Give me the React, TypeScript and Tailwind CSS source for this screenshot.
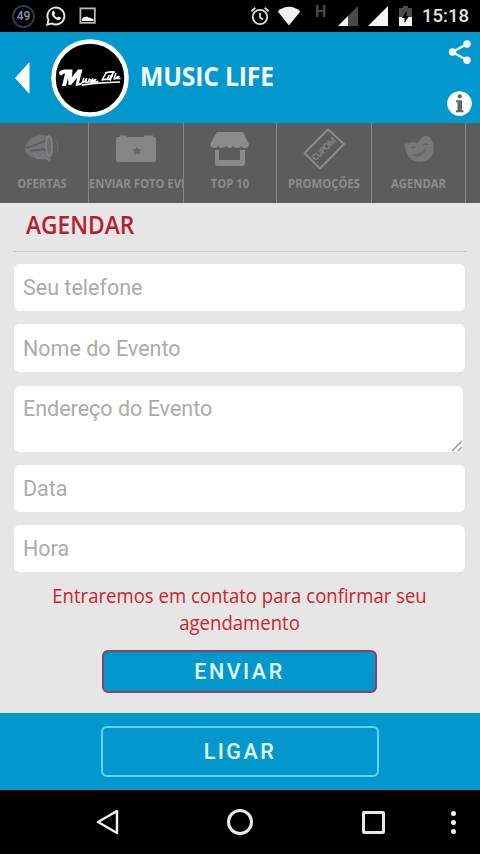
import React from 'react';

const StatusBar: React.FC = () => (
  <div className="h-8 bg-black flex items-center justify-between">
    <div className="flex items-center pl-3">
      <div className="w-[23px] h-[23px] rounded-full border-2 border-[#34344a] flex items-center justify-center text-[12px] font-medium text-[#8e94b8]">
        49
      </div>
      {/* WhatsApp */}
      <svg className="w-5 h-5 ml-[11px]" viewBox="0 0 20 20" fill="none">
        <path d="M1.3 18.7l1.2-4.6A8.5 8.5 0 1 1 5.8 17.4z" stroke="#e8e8e8" strokeWidth="1.9" />
        <path
          d="M6.7 5.2c.6-.5 1.2-.5 1.5 0l.9 1.9c.2.5-.8 1.1-.7 1.6.6 1.3 1.6 2.2 2.9 2.8.5.1 1.1-1.1 1.6-.9l1.9 1c.6.4-.1 1.9-1.1 2.3-1.6.6-4.2-.4-6-2.4-1.9-2-2.7-4.8-1-6.3z"
          fill="#e8e8e8"
        />
      </svg>
      {/* Picture */}
      <svg className="w-[18px] h-[18px] ml-[13px]" viewBox="0 0 18 18">
        <rect x="1.4" y="1.4" width="14.4" height="14.4" fill="none" stroke="#b9b9b9" strokeWidth="1.8" />
        <path d="M3 14v-2.200q2-2.500 3.500-1.800 1.500-1.500 3 .8 2-.8 2.500.7l2.500.5v2z" fill="#f2f2f2" />
      </svg>
    </div>

    <div className="flex items-center pr-[11px]">
      {/* Alarm */}
      <svg className="w-5 h-5" viewBox="0 0 20 20" fill="none" stroke="#dedede" strokeWidth="1.8">
        <circle cx="10" cy="11" r="7.2" />
        <path d="M10 6.8v4.7l3.2 2M1.3 5.2l4-3.4M18.7 5.2l-4-3.4" />
      </svg>
      <svg className="w-6 h-5 ml-[7px]" viewBox="0 0 24 20">
        <path d="M.8 5.400C7.200-.7 16.800-.7 23.200 5.400L12 19.500z" fill="#f2f2f2" />
      </svg>
      <span className="w-3 ml-[14px] mb-2 text-[16px] leading-4 font-bold text-[#4a4a4a]">H</span>
      <svg className="w-5 h-5 ml-[11px]" viewBox="0 0 20 20">
        <path d="M20 0v20H0z" fill="#4a4a4a" />
        <path d="M10 10v10H0z" fill="#f4f4f4" />
      </svg>
      <svg className="w-5 h-5 ml-[10px]" viewBox="0 0 20 20">
        <path d="M20 0v20H0z" fill="#f4f4f4" />
      </svg>
      {/* Battery charging */}
      <svg className="w-[13px] h-5 ml-[11px]" viewBox="0 0 13 20">
        <path d="M4 0h5v2h4v9H0V2h4z" fill="#4a4a4a" />
        <path d="M0 11h13v9H0z" fill="#f4f4f4" />
        <path d="M7.600 4.500V10H10L5.500 17V12H3z" fill="#000" />
      </svg>
      <span className="ml-[10px] w-[47px] text-[18.500px] leading-5 font-medium text-[#e4e4e4] whitespace-nowrap">
        15:18
      </span>
    </div>
  </div>
);

const Logo: React.FC = () => (
  <svg className="w-[78px] h-[78px] shrink-0" viewBox="0 0 78 78">
    <circle cx="39" cy="39" r="36.500" fill="#000" stroke="#fff" strokeWidth="4.500" />
    {/* script lettering of the brand */}
    <g fill="#fff">
      <path d="M8 33q2-2.500 5.500-2.500h8L21 38l6-7.500h4.500L28 44q1.500.5 3-1l1 1q-3 3.500-7.500 3l1.500-8-6 7h-2.500L17 39l-2 8h-4l3-12.500q-2.500-.5-3 2-3 0-3-3.500z" />
      <path d="M30 45.200q15-2.500 39-3v1.600q-22 .5-38 3.200z" />
    </g>
    <g fill="none" stroke="#fff" strokeWidth="1.500" strokeLinejoin="round">
      <path d="M33 39l-1.500 4q2 1 4-3.500l-.7 4q3 0 3.500-3.500l2 1.500q.5 2-2.500 1.500 3 .5 4-3l-1 3q2 1 4-2.500-2.500.5-2.500 2 2 1.200 5-.4" />
      <path d="M55 34l-4 7q2.500-1 5-.4l2-4-1.500 4 2-.4 3.500-6-3 7.400M59 37h3m3-3l-2 6q3 0 5-2.500-3 0-2.500 2h4M54 34q5-1.500 10-1" />
    </g>
  </svg>
);

const Header: React.FC = () => (
  <header className="h-[91px] bg-[#0398cd] flex items-center">
    <svg className="w-[15px] h-8 ml-[15px]" viewBox="0 0 15 32">
      <path d="M14.500 0v32L0 16z" fill="#fff" />
    </svg>
    <div className="ml-[21px]">
      <Logo />
    </div>
    <h1 className="ml-[11px] mb-1 w-[250px] origin-left scale-x-[0.9] font-['Open_Sans'] text-[27.500px] font-bold tracking-[-0.200px] text-[#f4fcff] whitespace-nowrap">
      MUSIC LIFE
    </h1>
    <div className="flex-1 h-full flex flex-col justify-between items-end pr-[8px] pt-2 pb-[7px]">
      <svg className="w-6 h-6" viewBox="0 0 24 24" fill="#fff">
        <circle cx="19" cy="4" r="3.700" />
        <circle cx="4.500" cy="12" r="3.700" />
        <circle cx="19" cy="20.200" r="3.700" />
        <path d="M19 4L4.500 12 19 20.200" fill="none" stroke="#fff" strokeWidth="2.200" />
      </svg>
      <svg className="w-[25px] h-[25px]" viewBox="0 0 25 25">
        <circle cx="12.500" cy="12.500" r="12.300" fill="#fff" />
        <circle cx="12.800" cy="5.300" r="2.100" fill="#666" />
        <path d="M9 9.200h6v10h1.500v2H9v-2h1.500v-8H9z" fill="#666" />
      </svg>
    </div>
  </header>
);

const MegaphoneIcon = () => (
  <svg className="w-[38px] h-9" viewBox="0 0 38 36">
    <path d="M3 14q4-8 14-10l11 1 3 14-4 9-9-1-10-1q-5-3-6-9z" fill="#737677" />
    <path d="M3 17l17-6 8-5M7 20l14-2 7 6M28 5l-2 9 5 5" stroke="#5c5c5c" strokeWidth="1.800" fill="none" />
    <ellipse cx="26" cy="15" rx="3" ry="10" fill="#6b6e6f" stroke="#7f8384" strokeWidth="1.500" />
    <path d="M11 21l3 6h8l-2-5M23 26l4 4" stroke="#7a7d7e" strokeWidth="2.500" fill="none" />
    <path d="M33 8q3 6 1 12" stroke="#626d6f" strokeWidth="1.500" fill="none" />
  </svg>
);

const CameraIcon = () => (
  <svg className="w-[42px] h-9" viewBox="0 0 42 36">
    <path d="M3 6h2V4.500h7V6h16l2-1.500h8l1 1.500q2 0 2 3v20q0 2-2 2H3q-2 0-2-2V9q0-3 2-3z" fill="#858585" />
    <path d="M22 15.500l1.500 2.500 3 .5-2 2 .5 3-3-1-3 1 .5-3-2-2 3-.5z" fill="#656565" />
  </svg>
);

const StoreIcon = () => (
  <svg className="w-10 h-9" viewBox="0 0 40 36">
    <path d="M7 1h26l6 12q0 4-4 4-3 0-4-2-1 2-4 2t-4-2q-1 2-3 2t-4-2q-1 2-4 2t-4-2q-1 2-4 2-3 0-4-4z" fill="#8b8b8b" />
    <path d="M5 19h4v10h21V19h5v13q0 3-3 3H8q-3 0-3-3z" fill="#8b8b8b" />
  </svg>
);

const CouponIcon = () => (
  <svg className="w-11 h-[42px]" viewBox="0 0 44 42">
    <path d="M2.500 25L26 1.500 42 16 18 40.500z" fill="none" stroke="#8b8b8b" strokeWidth="2" strokeLinejoin="round" />
    <text
      x="22"
      y="24"
      textAnchor="middle"
      transform="rotate(-44 22 21)"
      textLength="30"
      className="font-['Open_Sans'] text-[9px] font-bold"
      fill="#858585"
    >
      CUPOM
    </text>
  </svg>
);

const MaskIcon = () => (
  <svg className="w-8 h-9" viewBox="0 0 32 36">
    <path d="M1 13l9-2 4 1 7-7q5-1 7 3 4 7 2 14-3 9-13 9Q6 30 4 23z" fill="#787878" />
    <path d="M8 17l4-1M20 14q3-2 5 0M11 24q6 3 12-5-5 4-12 5z" fill="#656565" stroke="#656565" strokeWidth="1.600" />
  </svg>
);

interface TabProps {
  label: string;
  icon: React.ReactNode;
  className: string;
}

const Tab: React.FC<TabProps> = ({ label, icon, className }) => (
  <button className={`h-full shrink-0 overflow-hidden border-r border-[#858585] flex flex-col ${className}`}>
    <span className="h-[52px] w-full flex items-center justify-center">{icon}</span>
    <span className="w-full flex justify-center scale-x-[0.94] font-['Open_Sans'] text-[12px] leading-[18px] font-bold text-[#8c8c8c] whitespace-nowrap">
      {label}
    </span>
  </button>
);

const TabBar: React.FC = () => (
  <nav className="h-20 bg-[#5c5c5c] flex overflow-hidden">
    <Tab label="OFERTAS" icon={<MegaphoneIcon />} className="w-[89px] pr-1" />
    <button className="h-full w-[95px] shrink-0 overflow-hidden border-r border-[#858585] flex flex-col">
      <span className="h-[52px] w-full flex items-center justify-center">
        <CameraIcon />
      </span>
      <span className="origin-left scale-x-[0.94] font-['Open_Sans'] text-[12px] leading-[18px] font-bold text-[#8c8c8c] whitespace-nowrap">
        ENVIAR FOTO EVENTO
      </span>
    </button>
    <Tab label="TOP 10" icon={<StoreIcon />} className="w-[93px]" />
    <Tab label="PROMOÇÕES" icon={<CouponIcon />} className="w-[95px]" />
    <Tab label="AGENDAR" icon={<MaskIcon />} className="w-[94px]" />
  </nav>
);

const inputClass =
  'block w-full shrink-0 rounded-md bg-white px-[9px] text-[21.500px] text-gray-700 placeholder:text-[#ababab] outline-none';

const BookingForm: React.FC = () => (
  <main className="h-[510px] bg-[#e6e6e6] flex flex-col">
    <div className="mx-[13px] h-[49px] border-b border-[#cccccc]">
      <h2 className="ml-[13px] pt-1 w-[250px] origin-left scale-x-[0.91] font-['Open_Sans'] text-[25px] leading-[34px] font-semibold text-[#b5202c]">
        AGENDAR
      </h2>
    </div>
    <form className="flex flex-col pl-[14px] pr-[15px] pt-3" onSubmit={(e) => e.preventDefault()}>
      <input className={`${inputClass} h-[47px]`} placeholder="Seu telefone" />
      <input className={`${inputClass} h-12 mt-[13px]`} placeholder="Nome do Evento" />
      <div className="relative mt-[14px] mr-[2px] h-[66px]">
        <textarea className={`${inputClass} h-full resize-none pt-2 leading-[30px]`} placeholder="Endereço do Evento" />
        <svg className="absolute right-0 bottom-0 w-3 h-3" viewBox="0 0 12 12" stroke="#999" strokeWidth="1.500">
          <path d="M1 11L11 1M7 11l4-4" />
        </svg>
      </div>
      <input className={`${inputClass} h-[47px] mt-[13px]`} placeholder="Data" />
      <input className={`${inputClass} h-[47px] mt-[13px]`} placeholder="Hora" />
      <p className="mt-[10px] -mx-8 scale-x-[0.928] text-center font-['Open_Sans'] text-[20px] leading-[27px] text-[#d0222a]">
        Entraremos em contato para confirmar seu
        <br />
        agendamento
      </p>
      <button className="mt-[14px] self-center h-[43px] w-[275px] rounded-md border-2 border-[#8a4067] bg-[#0398cd] pt-0.5 text-[21.500px] font-medium tracking-[2.500px] text-[#e0f8ff]">
        ENVIAR
      </button>
    </form>
  </main>
);

const App: React.FC = () => {
  return (
    <div className="w-[480px] h-[854px] overflow-hidden bg-black font-[Roboto,sans-serif]">
      <StatusBar />
      <Header />
      <TabBar />
      <BookingForm />
      <footer className="h-[77px] bg-[#0398cd] flex items-center justify-center">
        <button className="h-[51px] w-[278px] rounded-md border-2 border-[#69d0f2] pt-0.5 text-[21.500px] font-medium tracking-[2.500px] text-[#e0f8ff]">
          LIGAR
        </button>
      </footer>

      {/* Android navigation */}
      <div className="h-16 bg-black flex items-center">
        <svg className="w-[23px] h-[26px] ml-24" viewBox="0 0 23 26">
          <path d="M21 2v22L2 13z" fill="none" stroke="#f2f2f2" strokeWidth="2.400" strokeLinejoin="round" />
        </svg>
        <div className="ml-[108px] w-[26px] h-[26px] rounded-full border-[3px] border-[#e8e8e8]"></div>
        <div className="ml-[109px] w-[23px] h-[23px] rounded-xs border-[3px] border-[#e8e8e8]"></div>
        <div className="ml-[66px] flex flex-col gap-1">
          <span className="w-[5px] h-[5px] rounded-full bg-[#f2f2f2]"></span>
          <span className="w-[5px] h-[5px] rounded-full bg-[#f2f2f2]"></span>
          <span className="w-[5px] h-[5px] rounded-full bg-[#f2f2f2]"></span>
        </div>
      </div>
    </div>
  );
};

export default App;
